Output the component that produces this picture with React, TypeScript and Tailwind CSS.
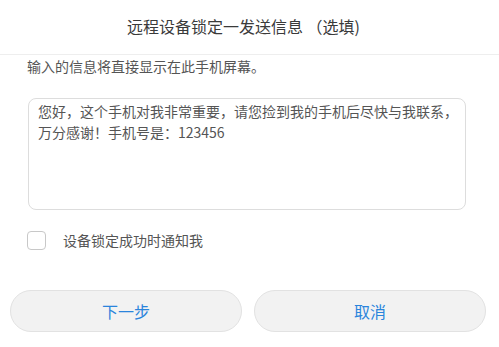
import React from "react";

export default function App() {
  return (
    <div
      className="w-[499px] h-[347px] bg-white overflow-hidden"
      style={{ fontFamily: '"Noto Sans CJK SC", "Noto Sans", sans-serif' }}
    >
      <div className="h-[55px] flex items-center justify-center border-b border-[#eeeeee] text-[16px] text-[#3a3a3a] pb-[3px] pr-[12px]">
        远程设备锁定一发送信息 （选填)
      </div>
      <div className="pl-[27px] text-[14px] leading-[22px] text-[#555555]">
        输入的信息将直接显示在此手机屏幕。
      </div>
      <div className="ml-[28px] mr-[33px] mt-[21px] h-[112px] border border-[#dddddd] rounded-[8px] pl-[9px] pt-[2px] text-[14px] leading-[21px] text-[#555555] whitespace-nowrap overflow-hidden">
        您好，这个手机对我非常重要，请您捡到我的手机后尽快与我联系，
        <br />
        万分感谢！手机号是：123456
      </div>
      <div className="flex items-center ml-[27px] mt-[20px] h-[20px]">
        <div className="w-[19px] h-[19px] border border-[#c8c8c8] rounded-[4px]" />
        <span className="ml-[17px] text-[14px] text-[#555555]">设备锁定成功时通知我</span>
      </div>
      <div className="flex gap-[12px] pl-[10px] pr-[13px] mt-[40px]">
        <button className="flex-1 h-[42px] rounded-full bg-[#f2f2f2] border border-[#e2e2e2] text-[16px] text-[#2a84dc]">
          下一步
        </button>
        <button className="flex-1 h-[42px] rounded-full bg-[#f2f2f2] border border-[#e2e2e2] text-[16px] text-[#2a84dc]">
          取消
        </button>
      </div>
    </div>
  );
}
